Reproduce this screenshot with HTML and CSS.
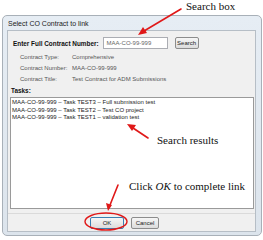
FILE: index.html
```html
<!DOCTYPE html>
<html lang="en">
<head>
  <meta charset="UTF-8" />
  <meta name="viewport" content="width=device-width, initial-scale=1.0" />
  <title>Select CO Contract to link</title>
  <link rel="stylesheet" href="styles.css">
</head>
<body>
  <div class="page">
    <div class="window">
      <div class="titlebar">Select CO Contract to link</div>
      <div class="client">
        <div class="search-row">
          <span class="search-label">Enter Full Contract Number:</span>
          <span class="search-input">MAA-CO-99-999</span>
          <span class="btn search-btn">Search</span>
        </div>
        <div class="details">
          <span>Contract Type:</span><span>Comprehensive</span>
          <span>Contract Number:</span><span>MAA-CO-99-999</span>
          <span>Contract Title:</span><span>Test Contract for ADM Submissions</span>
        </div>
        <div class="tasks-label">Tasks:</div>
        <div class="tasks">
          <div>MAA-CO-99-999 – Task TEST3 – Full submission test</div>
          <div>MAA-CO-99-999 – Task TEST2 – Test CO project</div>
          <div>MAA-CO-99-999 – Task TEST1 – validation test</div>
        </div>
        <div class="footer">
          <span class="btn ok-btn">OK</span>
          <span class="btn cancel-btn">Cancel</span>
        </div>
      </div>
    </div>

    <div class="note note-search">Search box</div>
    <div class="note note-results">Search results</div>
    <div class="note note-ok">Click <i>OK</i> to complete link</div>

    <svg class="marks" width="263" height="240" viewBox="0 0 263 240">
      <g stroke="#e01818" stroke-width="1.6" fill="none" stroke-linecap="round">
        <line x1="181" y1="9" x2="144" y2="31" />
        <line x1="148" y1="138" x2="133" y2="128" />
        <line x1="118" y1="185" x2="110" y2="205" />
        <ellipse cx="106" cy="221.5" rx="21" ry="8.5" stroke-width="1.4" />
      </g>
      <g fill="#e01818">
        <polygon points="138,35 143,27 147,33" />
        <polygon points="127,124 136,125 132,131" />
        <polygon points="108,211 106,203 112,205" />
      </g>
    </svg>
  </div>
</body>
</html>
```

FILE: styles.css
```css
body {
  margin: 0;
  background: white;
  font-family: "Liberation Sans", Arial, sans-serif;
}
.page {
  position: relative;
  width: 263px;
  height: 240px;
  overflow: hidden;
}
.window {
  margin: 15px 0 0 2px;
  width: 249px;
  height: 216px;
  padding: 0 5px 3px 4px;
  border: 1px solid #a8b0b8;
  border-radius: 5px;
  background: linear-gradient(#e6edf4, #dce4ec);
  display: flex;
  flex-direction: column;
}
.titlebar {
  height: 14px;
  line-height: 15px;
  font-size: 7px;
  color: #222;
  padding-left: 1px;
}
.client {
  flex: 1;
  background: #f0f0f0;
  border: 1px solid #b6bec6;
  display: flex;
  flex-direction: column;
  padding: 6px 1px 0 2px;
  font-size: 6px;
  color: #333;
}
.search-row {
  display: flex;
  align-items: center;
  padding-left: 3px;
}
.search-label {
  font-weight: bold;
  font-size: 6.4px;
  color: #111;
}
.search-input {
  width: 60px;
  height: 10px;
  line-height: 10px;
  border: 1px solid #abadb3;
  background: white;
  padding: 0 0 0 3px;
  color: #666;
  margin-left: 4px;
}
.btn {
  border: 1px solid #8c8c8c;
  border-radius: 2px;
  background: linear-gradient(#f6f6f6, #dcdcdc);
  font-size: 6px;
  color: #222;
  text-align: center;
  height: 10px;
  line-height: 10px;
}
.search-btn {
  margin-left: 7px;
  width: 22px;
}
.details {
  display: grid;
  grid-template-columns: 52px auto;
  row-gap: 4px;
  margin: 5px 0 0 10px;
  line-height: 7px;
  color: #555;
}
.tasks-label {
  font-weight: bold;
  font-size: 6.4px;
  line-height: 8px;
  color: #111;
  margin-top: 4px;
  padding-left: 1px;
}
.tasks {
  margin-top: 2px;
  height: 108px;
  background: white;
  border: 1px solid #9a9a9a;
  padding: 1px 1px;
  line-height: 7.5px;
  color: #222;
}
.footer {
  flex: 1;
  display: flex;
  align-items: center;
  gap: 7px;
  margin: 4px -1px 0 -2px;
  padding: 0 0 0 82px;
  border-top: 1px solid #dadada;
}
.ok-btn {
  width: 32px;
  border-color: #3c7fb1;
}
.cancel-btn {
  width: 26px;
}
.note {
  position: absolute;
  font-family: "Liberation Serif", "Times New Roman", serif;
  font-size: 11px;
  color: #111;
  white-space: nowrap;
}
.note-search {
  left: 186px;
  top: 0;
}
.note-results {
  left: 157px;
  top: 134px;
}
.note-ok {
  left: 129px;
  top: 180px;
}
.marks {
  position: absolute;
  left: 0;
  top: 0;
}
```
